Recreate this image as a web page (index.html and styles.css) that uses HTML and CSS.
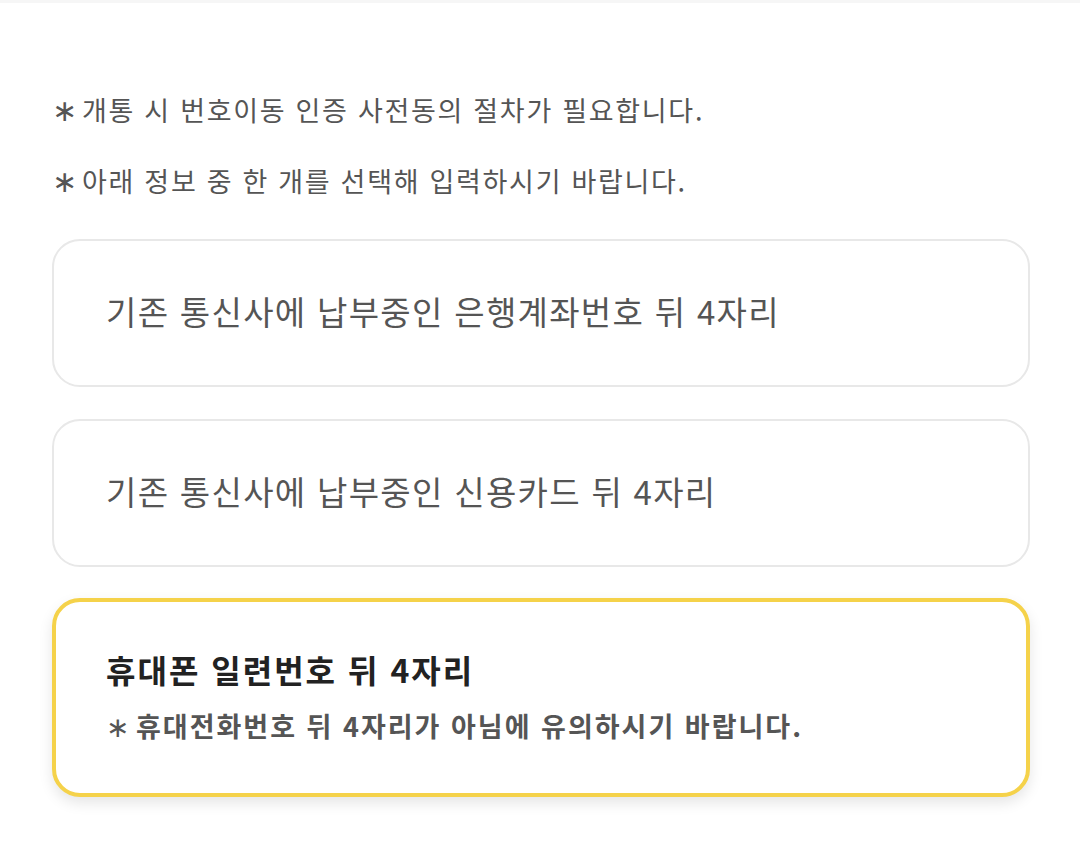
FILE: index.html
```html
<!DOCTYPE html>
<html lang="ko">
<head>
<meta charset="utf-8">
<link rel="stylesheet" href="styles.css">
</head>
<body>
<div class="topbar"></div>
<main class="page">
  <p class="note"><span class="ast">∗</span>개통 시 번호이동 인증 사전동의 절차가 필요합니다.</p>
  <p class="note"><span class="ast">∗</span>아래 정보 중 한 개를 선택해 입력하시기 바랍니다.</p>
  <div class="options">
    <div class="card"><span class="card-text">기존 통신사에 납부중인 은행계좌번호 뒤 4자리</span></div>
    <div class="card"><span class="card-text">기존 통신사에 납부중인 신용카드 뒤 4자리</span></div>
    <div class="card selected">
      <span class="card-title">휴대폰 일련번호 뒤 4자리</span>
      <span class="card-sub"><span class="ast">∗</span>휴대전화번호 뒤 4자리가 아님에 유의하시기 바랍니다.</span>
    </div>
  </div>
</main>
</body>
</html>
```

FILE: styles.css
```css
html, body {
  margin: 0;
  padding: 0;
  background: #ffffff;
}
body {
  font-family: "Noto Sans CJK KR", "Noto Sans", sans-serif;
  width: 1080px;
  height: 844px;
  overflow: hidden;
}
.topbar {
  height: 3px;
  background: #f6f6f6;
}
.page {
  padding: 88px 50px 0 52px;
  display: flex;
  flex-direction: column;
}
.note {
  margin: 0 0 32px 0;
  font-size: 27px;
  line-height: 38px;
  color: #555555;
  letter-spacing: 1.7px;
}
.ast {
  display: inline-block;
  font-family: "DejaVu Sans", sans-serif;
  font-size: 30px;
  font-weight: 400;
  width: 30px;
  letter-spacing: 0;
}
.options {
  display: flex;
  flex-direction: column;
  gap: 32px;
  margin-top: 6px;
}
.card {
  height: 148px;
  box-sizing: border-box;
  border: 2px solid #e8e8e8;
  border-radius: 28px;
  padding: 0 52px 4px;
  display: flex;
  flex-direction: column;
  justify-content: center;
  background: #fff;
}
.card-text {
  font-size: 33px;
  color: #555555;
  letter-spacing: 1.3px;
}
.card.selected {
  height: 199px;
  margin-top: -1px;
  border: 4px solid #f5d24a;
  box-shadow: 0 6px 14px rgba(0,0,0,0.10);
  padding: 0 50px 4px;
  gap: 14px;
}
.card-title {
  font-size: 32px;
  font-weight: 700;
  color: #222222;
  letter-spacing: 2px;
}
.card-sub {
  font-size: 27px;
  font-weight: 700;
  color: #555555;
  letter-spacing: 2px;
}
.card-sub .ast {
  font-size: 28px;
  width: 30px;
}
```
